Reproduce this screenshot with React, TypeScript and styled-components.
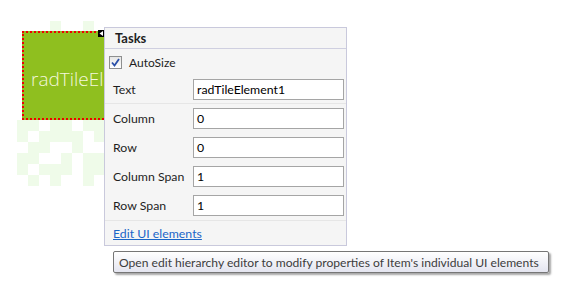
import React from "react";
import styled, { createGlobalStyle } from "styled-components";

const Global = createGlobalStyle`
  html, body { margin: 0; padding: 0; background: #ffffff; }
  body { font-family: Lato, "Open Sans", sans-serif; }
`;

const Canvas = styled.div`
  position: relative;
  width: 561px;
  height: 297px;
  overflow: hidden;
  background: #ffffff;
`;

const Checker = styled.div`
  position: absolute;
  left: 17px;
  top: 21px;
  display: grid;
  grid-template-columns: repeat(8, 11px);
  grid-auto-rows: 11px;
`;

const Cell = styled.div<{ $on: boolean }>`
  background: ${(p) => (p.$on ? "#effbe9" : "transparent")};
`;

const Tile = styled.div`
  position: absolute;
  left: 22px;
  top: 31px;
  width: 82px;
  height: 89px;
  box-sizing: border-box;
  background: #8fbf1f;
  border: 2px dotted #ee0000;
  border-right: none;
  display: flex;
  align-items: center;
  padding-left: 7px;
  overflow: hidden;
`;

const TileText = styled.span`
  font-family: "Open Sans", "Noto Sans", sans-serif;
  font-weight: 300;
  font-size: 19px;
  color: #f4f7dc;
  white-space: nowrap;
  margin-top: 6px;
`;

const TagGlyph = styled.svg`
  position: absolute;
  left: 98px;
  top: 30px;
`;

const Panel = styled.div`
  position: absolute;
  left: 104px;
  top: 27px;
  width: 243px;
  height: 219px;
  box-sizing: border-box;
  background: #f5f5f5;
  border: 1px solid #c9c9dc;
  display: flex;
  flex-direction: column;
  font-family: Lato, "Open Sans", sans-serif;
  font-size: 12px;
  color: #1e1e1e;
`;

const Header = styled.div`
  height: 21px;
  box-sizing: border-box;
  border-bottom: 1px solid #cfcfe0;
  padding-left: 10px;
  display: flex;
  align-items: center;
  font-weight: 700;
  font-size: 13px;
  color: #1e1e1e;
`;

const CheckRow = styled.div`
  height: 27px;
  display: flex;
  align-items: center;
  padding-left: 4px;
  gap: 7px;
`;

const Box = styled.span`
  width: 13px;
  height: 13px;
  box-sizing: border-box;
  border: 1px solid #8e8f8f;
  background: linear-gradient(#e6e6e6, #ffffff);
  display: flex;
  align-items: center;
  justify-content: center;
`;

const FieldRow = styled.div<{ $h: number; $line?: boolean }>`
  height: ${(p) => p.$h}px;
  box-sizing: border-box;
  display: grid;
  grid-template-columns: 80px 151px;
  align-items: center;
  padding-left: 8px;
  border-bottom: ${(p) => (p.$line ? "1px solid #e6e6e6" : "none")};
`;

const Label = styled.span`
  font-size: 12.3px;
  color: #1e1e1e;
`;

const Input = styled.div`
  height: 21px;
  box-sizing: border-box;
  border: 1px solid #a5a5a5;
  background: #ffffff;
  padding-left: 3px;
  display: flex;
  align-items: center;
  font-size: 12.3px;
  color: #000000;
`;

const LinkRow = styled.div`
  flex: 1;
  display: flex;
  align-items: center;
  padding-left: 8px;
  border-top: 1px solid #e6e6e6;
`;

const Link = styled.a`
  color: #1a66c8;
  text-decoration: underline;
  font-size: 12.3px;
`;

const Tooltip = styled.div`
  position: absolute;
  left: 113px;
  top: 251px;
  width: 436px;
  height: 22px;
  box-sizing: border-box;
  border: 1px solid #767676;
  border-radius: 2px;
  background: linear-gradient(#ffffff, #e4e5f0);
  box-shadow: 2px 2px 2px rgba(0, 0, 0, 0.35);
  display: flex;
  align-items: center;
  padding-left: 5px;
  font-family: Lato, "Open Sans", sans-serif;
  font-size: 12.1px;
  color: #3c3c3c;
  white-space: nowrap;
`;

const pattern = [
  "00010010",
  "00000000",
  "00000000",
  "00000000",
  "00000000",
  "00000000",
  "00000000",
  "00000000",
  "00000000",
  "11011011",
  "10111101",
  "01100100",
  "11001011",
  "10111011",
  "01010010",
];

const fields = [
  { label: "Column", value: "0" },
  { label: "Row", value: "0" },
  { label: "Column Span", value: "1" },
  { label: "Row Span", value: "1" },
];

export default function App() {
  return (
    <Canvas>
      <Global />
      <Checker>
        {pattern.flatMap((row, r) =>
          row.split("").map((c, i) => <Cell key={`${r}-${i}`} $on={c === "1"} />)
        )}
      </Checker>
      <Tile>
        <TileText>radTileElement1</TileText>
      </Tile>
      <TagGlyph width="7" height="7" viewBox="0 0 7 7">
        <rect x="0" y="0" width="7" height="7" fill="#000" />
        <polygon points="1.5,3.5 5,1 5,6" fill="#fff" />
      </TagGlyph>
      <Panel>
        <Header>Tasks</Header>
        <CheckRow>
          <Box>
            <svg width="9" height="9" viewBox="0 0 9 9">
              <path d="M1 4.5 L3.5 7.5 L8 1" stroke="#2a4fa8" strokeWidth="1.8" fill="none" />
            </svg>
          </Box>
          <span>AutoSize</span>
        </CheckRow>
        <FieldRow $h={28} $line>
          <Label>Text</Label>
          <Input>radTileElement1</Input>
        </FieldRow>
        {fields.map((f) => (
          <FieldRow key={f.label} $h={29}>
            <Label>{f.label}</Label>
            <Input>{f.value}</Input>
          </FieldRow>
        ))}
        <LinkRow>
          <Link href="#">Edit UI elements</Link>
        </LinkRow>
      </Panel>
      <Tooltip>Open edit hierarchy editor to modify properties of Item's individual UI elements</Tooltip>
    </Canvas>
  );
}
